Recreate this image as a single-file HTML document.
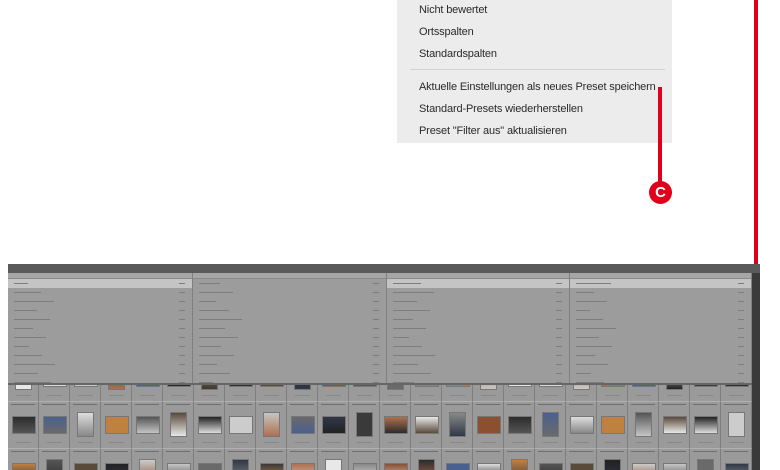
<!DOCTYPE html>
<html><head><meta charset="utf-8"><style>
*{margin:0;padding:0;box-sizing:border-box}
body{width:780px;height:470px;background:#fff;position:relative;overflow:hidden;font-family:"Liberation Sans",sans-serif}
.menu{position:absolute;left:397px;top:0;width:275px;height:143px;background:#ececec}
.menu div.i{position:absolute;left:22px;font-size:11px;color:#2a2a2a;white-space:nowrap;letter-spacing:-0.15px}
.sep{position:absolute;left:13px;width:255px;top:69px;height:1px;background:#d2d2d2}
.red{position:absolute;background:#e0001b}
.circ{position:absolute;left:649px;top:181px;width:23px;height:23px;border-radius:50%;background:#e0001b;color:#fff;font-weight:bold;font-size:15px;text-align:center;line-height:23px}
.shot{position:absolute;left:8px;top:264px;width:752px;height:206px;background:#8e8e8e;overflow:hidden}
.title{position:absolute;left:0;top:0;width:752px;height:9px;background:#5a5a5a}
.panel{position:absolute;left:0;top:9px;width:744px;height:112px;background:#9c9c9c;border-bottom:2px solid #666;overflow:hidden}
.col{position:absolute;top:0;height:112px;border-right:1px solid #808080;overflow:hidden}
.hd{height:6px;background:#a6a6a6;border-bottom:1px solid #8a8a8a}
.row{height:9px}
.row.sel{background:#c4c4c4}
.ln{position:absolute;height:2px;background:#7d7d7d}
.scroll{position:absolute;left:744px;top:9px;width:8px;height:197px;background:#3a3a3a}
.cell{position:absolute;width:31px;height:47px;background:#9a9a9a;border-right:1px solid #7e7e7e;border-top:1px solid #b0b0b0}
.th{position:absolute;border:1px solid #777}
</style></head><body>
<div class="menu">
<div class="i" style="top:4px">Nicht bewertet</div>
<div class="i" style="top:26px">Ortsspalten</div>
<div class="i" style="top:48px">Standardspalten</div>
<div class="sep"></div>
<div class="i" style="top:81px">Aktuelle Einstellungen als neues Preset speichern</div>
<div class="i" style="top:103px">Standard-Presets wiederherstellen</div>
<div class="i" style="top:125px">Preset "Filter aus" aktualisieren</div>
</div>
<div class="red" style="left:658px;top:87px;width:4px;height:96px"></div>
<div class="circ">C</div>
<div class="red" style="left:754px;top:0;width:4px;height:266px"></div>
<div class="shot">
<div id="grid"></div>
<div class="title"></div>
<div class="panel" id="panel"></div>
<div class="scroll"></div>
</div>
<script>
var g=document.getElementById('grid'),h='';
var cols=['#e8e8e8','#555','#3a3a3a','#ddd','#6a6a6a','#2c2c2c','#ccc','#888','#5a4a3a','#b07050','#c08040','#303848','#4a6090','#c5c5c5','#8a5030','#222'];
var rowsY=[90,137,184];
for(var r=0;r<3;r++)for(var c=0;c<24;c++){
 var x=c*31,y=rowsY[r];
 h+='<div class="cell" style="left:'+x+'px;top:'+y+'px"></div>';
 var col=cols[(c*7+r*5)%cols.length];
 var port=(c+r)%3==0;
 var w=port?17:24,hh=port?25:18;
 var tx=x+Math.round((31-w)/2),ty=y+24-Math.round(hh/2);
 h+='<div class="th" style="left:'+tx+'px;top:'+ty+'px;width:'+w+'px;height:'+hh+'px;background:linear-gradient('+col+','+cols[(c*3+r)%cols.length]+')"></div>';
 h+='<div class="ln" style="left:'+(x+3)+'px;top:'+(y+3)+'px;width:24px;height:1px;background:#6e6e6e"></div>';
 h+='<div class="ln" style="left:'+(x+8)+'px;top:'+(y+41)+'px;width:15px;height:1px;background:#888"></div>';
}
g.innerHTML=h;
var p=document.getElementById('panel'),ph='';
var cs=[[0,185],[185,194],[379,183],[562,182]];
for(var i=0;i<4;i++){
 var L=cs[i][0],W=cs[i][1];
 ph+='<div class="col" style="left:'+L+'px;width:'+W+'px"><div class="hd"></div>';
 for(var k=0;k<12;k++){ph+='<div class="row'+(k==0&&i!=1?' sel':'')+'" style="position:relative">'+
 '<div class="ln" style="left:6px;top:4px;width:'+(14+((k*13+i*7)%30))+'px;height:1px"></div>'+
 '<div class="ln" style="left:'+(W-14)+'px;top:4px;width:6px;height:1px"></div></div>';}
 ph+='</div>';
}
p.innerHTML=ph;
</script>
</body></html>
